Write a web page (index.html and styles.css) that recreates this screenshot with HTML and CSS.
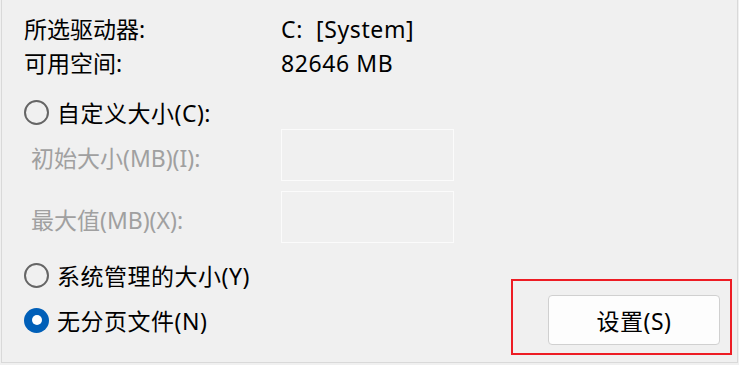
FILE: index.html
```html
<!DOCTYPE html>
<html lang="zh-CN">
<head>
  <meta charset="UTF-8">
  <title>虚拟内存</title>
  <link rel="stylesheet" href="styles.css">
</head>
<body>
  <div class="panel">
    <div class="info">
      <div class="info-label">所选驱动器:</div>
      <div class="info-value">C:&nbsp; [System]</div>
      <div class="info-label">可用空间:</div>
      <div class="info-value">82646 MB</div>
    </div>

    <label class="radio radio-custom">
      <span class="radio-dot"></span>
      <span class="radio-text">自定义大小(C):</span>
    </label>

    <div class="field first">
      <span class="field-label">初始大小(MB)(I):</span>
      <input class="field-input" type="text" disabled>
    </div>
    <div class="field">
      <span class="field-label">最大值(MB)(X):</span>
      <input class="field-input" type="text" disabled>
    </div>

    <div class="lower">
      <div class="lower-options">
        <label class="radio">
          <span class="radio-dot"></span>
          <span class="radio-text">系统管理的大小(Y)</span>
        </label>
        <label class="radio radio-last">
          <span class="radio-dot checked"></span>
          <span class="radio-text">无分页文件(N)</span>
        </label>
      </div>
      <div class="highlight">
        <button class="set-button">设置(S)</button>
      </div>
    </div>
  </div>
</body>
</html>
```

FILE: styles.css
```css
body {
  margin: 0;
  background: #f0f0f0;
  font-family: "Noto Sans", "Noto Sans CJK SC", sans-serif;
  font-size: 23px;
  color: #000;
}
.panel {
  margin-left: 1px;
  width: 737px;
  height: 363px;
  box-sizing: border-box;
  border-left: 1px solid #d9d9d9;
  border-right: 1px solid #d9d9d9;
  border-bottom: 1px solid #d9d9d9;
  padding-left: 22px;
  padding-top: 12px;
}
.info {
  display: grid;
  grid-template-columns: 257px auto;
  line-height: 34px;
}
.info-value {
  letter-spacing: 0.6px;
}
.radio {
  display: flex;
  align-items: center;
  height: 30px;
  gap: 8px;
}
.radio-text {
  letter-spacing: 0.5px;
}
.radio-custom {
  margin-top: 17px;
}
.radio-dot {
  width: 25px;
  height: 25px;
  box-sizing: border-box;
  border: 2px solid #656565;
  border-radius: 50%;
  flex: none;
}
.radio-dot.checked {
  border: none;
  background: #005fb8;
  display: flex;
  align-items: center;
  justify-content: center;
}
.radio-dot.checked::after {
  content: "";
  width: 10px;
  height: 10px;
  border-radius: 50%;
  background: #fff;
}
.field {
  display: flex;
  align-items: center;
  height: 52px;
  margin-top: 10px;
}
.field.first {
  margin-top: 2px;
}
.field-label {
  width: 250px;
  padding-left: 7px;
  color: #a0a0a0;
  padding-top: 4px;
}
.field-input {
  width: 173px;
  height: 52px;
  box-sizing: border-box;
  border: 1px solid #fbfbfb;
  background: #f0f0f0;
  margin: 0;
}
.lower {
  display: flex;
  justify-content: space-between;
  margin-top: 17px;
}
.radio-last {
  margin-top: 15px;
}
.highlight {
  margin-top: 19px;
  margin-right: 5px;
  border: 2px solid #ed1c24;
  padding: 14px 10px 8px 35px;
}
.set-button {
  display: block;
  width: 172px;
  height: 50px;
  border: 1px solid #d0d0d0;
  border-radius: 4px;
  background: #fdfdfd;
  font-family: inherit;
  font-size: 23px;
  letter-spacing: 0.5px;
  color: #000;
}
```
